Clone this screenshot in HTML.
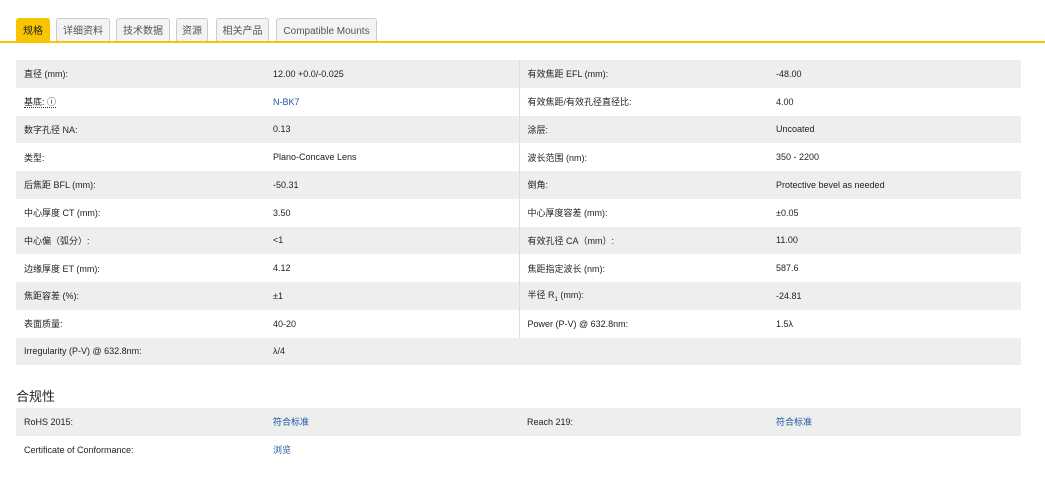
<!DOCTYPE html>
<html><head><meta charset="utf-8"><style>
body{margin:0;width:1045px;height:483px;background:#fff;font-family:"Liberation Sans","Noto Sans CJK SC",sans-serif;color:#222;overflow:hidden;position:relative}
.tab{position:absolute;top:18px;height:23px;border:1px solid #ccc;border-bottom:none;border-radius:3px 3px 0 0;background:#f3f3f3;font-size:10px;color:#555;line-height:26px;box-sizing:border-box;text-align:center}
.tab.a{background:#f7c600;border-color:#f7c600;color:#222;height:24px}
.line{position:absolute;left:0;top:41px;width:1045px;height:2px;background:#f7c600}
table{position:absolute;left:16px;border-collapse:collapse;width:1005px;font-size:9px}
td{height:27.75px;padding:0 0 0 8px;box-sizing:border-box}
tr:nth-child(odd) td{background:#eeeeee}
td.s{border-left:1px solid #ddd}
a{color:#1f5aa6;text-decoration:none}
h3{position:absolute;left:16px;top:386px;margin:0;font-size:13px;font-weight:normal;color:#222}
</style></head><body>
<div class="tab a" style="left:16px;width:34px">规格</div>
<div class="tab" style="left:56px;width:54px">详细资料</div>
<div class="tab" style="left:116px;width:54px">技术数据</div>
<div class="tab" style="left:176px;width:32px">资源</div>
<div class="tab" style="left:216px;width:53px">相关产品</div>
<div class="tab" style="left:276px;width:101px">Compatible Mounts</div>
<div class="line"></div>
<table style="top:60px">
<colgroup><col style="width:249px"><col style="width:254px"><col style="width:249px"><col style="width:253px"></colgroup>
<tr><td>直径 (mm):</td><td>12.00 +0.0/-0.025</td><td class="s">有效焦距 EFL (mm):</td><td>-48.00</td></tr>
<tr><td><span style="border-bottom:1px dotted #333">基底: ⓘ</span></td><td><a>N-BK7</a></td><td class="s">有效焦距/有效孔径直径比:</td><td>4.00</td></tr>
<tr><td>数字孔径 NA:</td><td>0.13</td><td class="s">涂层:</td><td>Uncoated</td></tr>
<tr><td>类型:</td><td>Plano-Concave Lens</td><td class="s">波长范围 (nm):</td><td>350 - 2200</td></tr>
<tr><td>后焦距 BFL (mm):</td><td>-50.31</td><td class="s">倒角:</td><td>Protective bevel as needed</td></tr>
<tr><td>中心厚度 CT (mm):</td><td>3.50</td><td class="s">中心厚度容差 (mm):</td><td>±0.05</td></tr>
<tr><td>中心偏（弧分）:</td><td>&lt;1</td><td class="s">有效孔径 CA（mm）:</td><td>11.00</td></tr>
<tr><td>边缘厚度 ET (mm):</td><td>4.12</td><td class="s">焦距指定波长 (nm):</td><td>587.6</td></tr>
<tr><td>焦距容差 (%):</td><td>±1</td><td class="s">半径 R<sub style="font-size:6px">1</sub> (mm):</td><td>-24.81</td></tr>
<tr><td>表面质量:</td><td>40-20</td><td class="s">Power (P-V) @ 632.8nm:</td><td>1.5λ</td></tr>
<tr><td>Irregularity (P-V) @ 632.8nm:</td><td>λ/4</td><td></td><td></td></tr>
</table>
<h3>合规性</h3>
<table style="top:408px">
<colgroup><col style="width:249px"><col style="width:254px"><col style="width:249px"><col style="width:253px"></colgroup>
<tr><td>RoHS 2015:</td><td><a>符合标准</a></td><td>Reach 219:</td><td><a>符合标准</a></td></tr>
<tr><td>Certificate of Conformance:</td><td><a>浏览</a></td><td></td><td></td></tr>
</table>
</body></html>
